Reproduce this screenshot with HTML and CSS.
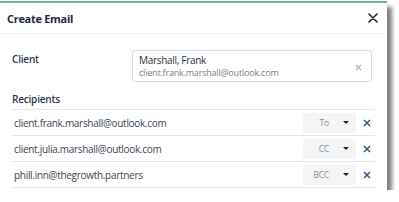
FILE: index.html
```html
<!DOCTYPE html>
<html>
<head>
<meta charset="utf-8">
<link rel="stylesheet" href="styles.css">
</head>
<body>
<div class="dialog">
  <div class="header">
    <span class="title">Create Email</span>
    <svg class="close" width="10" height="10" viewBox="0 0 10 10"><path d="M1 1 L9 9 M9 1 L1 9" stroke="#1e2a3a" stroke-width="1.6" stroke-linecap="round"/></svg>
  </div>
  <div class="body">
    <div class="client-row">
      <div class="label">Client</div>
      <div class="input">
        <div class="in-text">
          <div class="name">Marshall, Frank</div>
          <div class="mail">client.frank.marshall@outlook.com</div>
        </div>
        <svg class="clear" width="7" height="7" viewBox="0 0 7 7"><path d="M1 1 L6 6 M6 1 L1 6" stroke="#b5b9be" stroke-width="1.1"/></svg>
      </div>
    </div>
    <div class="label rec-label">Recipients</div>
    <div class="list">
      <div class="row">
        <span class="addr">client.frank.marshall@outlook.com</span>
        <div class="sel"><span class="sel-text">To</span><span class="caret"></span></div>
        <svg class="rm" width="8" height="8" viewBox="0 0 8 8"><path d="M1 1 L7 7 M7 1 L1 7" stroke="#2f5b8c" stroke-width="1.5"/></svg>
      </div>
      <div class="row">
        <span class="addr">client.julia.marshall@outlook.com</span>
        <div class="sel"><span class="sel-text">CC</span><span class="caret"></span></div>
        <svg class="rm" width="8" height="8" viewBox="0 0 8 8"><path d="M1 1 L7 7 M7 1 L1 7" stroke="#2f5b8c" stroke-width="1.5"/></svg>
      </div>
      <div class="row">
        <span class="addr">phill.inn@thegrowth.partners</span>
        <div class="sel"><span class="sel-text">BCC</span><span class="caret"></span></div>
        <svg class="rm" width="8" height="8" viewBox="0 0 8 8"><path d="M1 1 L7 7 M7 1 L1 7" stroke="#2f5b8c" stroke-width="1.5"/></svg>
      </div>
    </div>
  </div>
</div>
</body>
</html>
```
FILE: styles.css
```css
html, body {
  margin: 0;
  padding: 0;
  background: #ffffff;
}
body {
  font-family: "Open Sans", "Liberation Sans", sans-serif;
  color: #34404f;
}
.dialog {
  width: 387px;
  margin-top: 1px;
  border-top: 2px solid #5dbb8c;
  background: #ffffff;
  box-shadow: 5px 6px 4px rgba(0, 0, 0, 0.5);
}
.header {
  height: 30px;
  display: flex;
  align-items: center;
  justify-content: space-between;
  padding: 0 9px 0 7px;
  border-bottom: 1px solid #eef0f2;
}
.title {
  font-size: 11px;
  font-weight: 700;
  color: #1f2b3c;
  letter-spacing: -0.3px;
}
.body {
  padding: 16px 12px 2px 12px;
}
.client-row {
  display: flex;
}
.label {
  width: 120px;
  font-size: 10px;
  font-weight: 600;
  color: #2c3a4b;
  letter-spacing: -0.2px;
  line-height: 15px;
  padding-top: 2px;
}
.input {
  width: 240px;
  height: 32px;
  box-sizing: border-box;
  border: 1px solid #d9dcdf;
  border-radius: 3px;
  display: flex;
  align-items: center;
  justify-content: space-between;
  padding: 0 9px 0 6px;
}
.name {
  font-size: 10px;
  line-height: 13px;
  letter-spacing: -0.3px;
  color: #2a3442;
}
.mail {
  font-size: 9px;
  line-height: 12px;
  letter-spacing: -0.2px;
  color: #7a8089;
}
.clear {
  margin-top: 2px;
}
.rec-label {
  margin-top: 10px;
  margin-bottom: 2px;
  padding-top: 0;
}
.list {
  width: 363px;
  border-top: 1px solid #e4e6e9;
}
.row {
  height: 25px;
  border-bottom: 1px solid #e4e6e9;
  display: flex;
  align-items: center;
  padding: 0 4px 0 2px;
}
.addr {
  flex: 1;
  font-size: 10px;
  letter-spacing: -0.3px;
  color: #3a4656;
}
.sel {
  min-width: 36px;
  height: 20px;
  background: #f4f5f6;
  border-radius: 2px;
  display: flex;
  align-items: center;
  justify-content: flex-end;
  padding: 0 7px 0 10px;
}
.sel-text {
  font-size: 8.5px;
  letter-spacing: -0.2px;
  color: #8a9098;
}
.caret {
  width: 0;
  height: 0;
  margin-left: 14px;
  border-left: 3px solid transparent;
  border-right: 3px solid transparent;
  border-top: 3.5px solid #1e2530;
}
.rm {
  margin-left: 7px;
}
```
